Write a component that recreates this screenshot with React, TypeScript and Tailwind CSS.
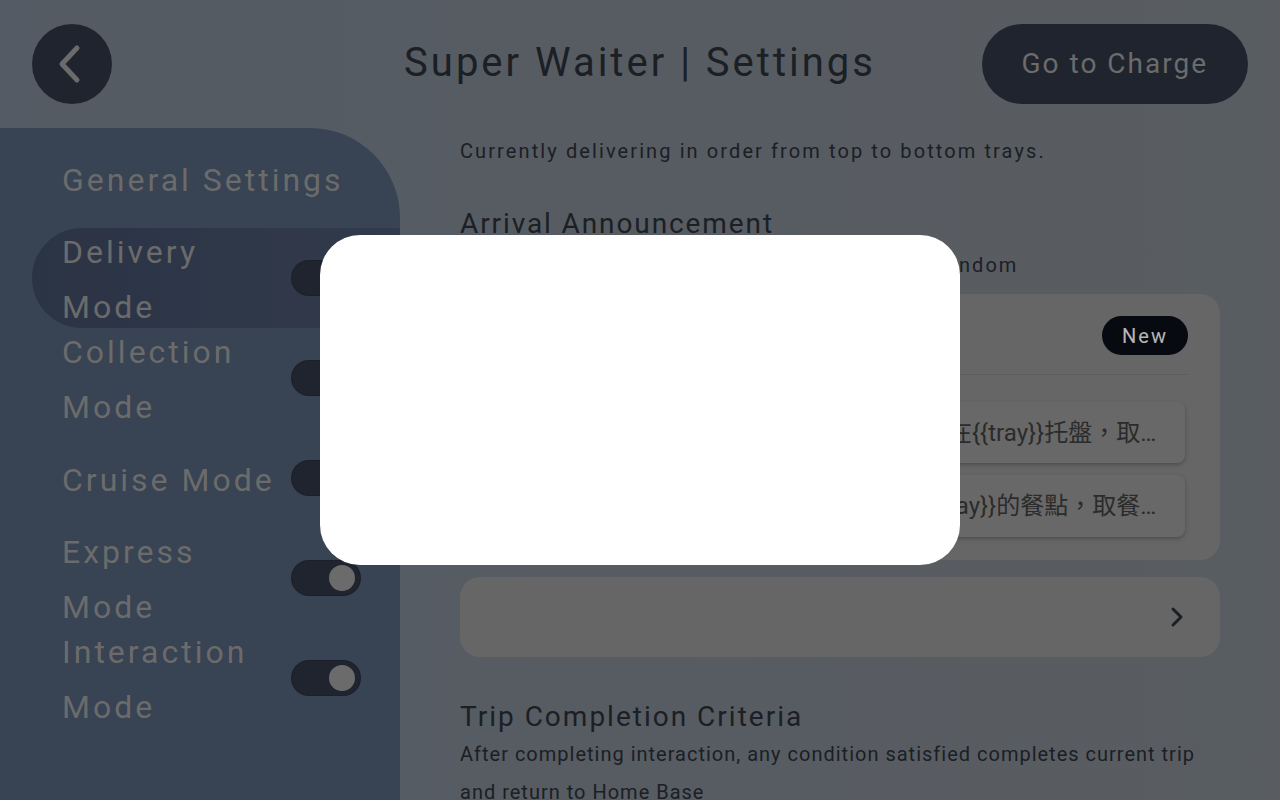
import React from 'react';
import { ChevronRight } from 'lucide-react';

const modes = [
  { label: 'Delivery Mode', active: true },
  { label: 'Collection Mode', active: false },
  { label: 'Cruise Mode', active: false },
  { label: 'Express Mode', active: false },
  { label: 'Interaction Mode', active: false },
];

function Toggle() {
  return (
    <div className="w-[68px] h-[34px] rounded-full bg-[#292e3b] ring-1 ring-[#232834] flex items-center justify-end pr-[5px] flex-shrink-0">
      <div className="w-[26px] h-[26px] rounded-full bg-[#868686]" />
    </div>
  );
}

export default function App() {
  return (
    <div
      className="relative w-[1280px] h-[800px] overflow-hidden bg-gradient-to-r from-[#6a727d] to-[#70757a] flex flex-col"
      style={{ fontFamily: 'Roboto, "Noto Sans CJK TC", sans-serif' }}
    >
      {/* Header */}
      <header className="h-[128px] flex-shrink-0 grid grid-cols-[1fr_auto_1fr] items-center px-[32px]">
        <button className="w-[80px] h-[80px] rounded-full bg-[#292e3b] justify-self-start">
          <svg viewBox="0 0 80 80" className="w-[80px] h-[80px]">
            <path d="M45 24 L30 40 L45 56" fill="none" stroke="#868686" strokeWidth="5" strokeLinecap="round" strokeLinejoin="round" />
          </svg>
        </button>
        <h1 className="text-[40px] tracking-[3px] text-[#23272d] leading-none pb-[2px]">Super Waiter | Settings</h1>
        <button className="justify-self-end h-[80px] px-[40px] rounded-full bg-[#292e3b] text-[#868686] text-[28px] tracking-[2px]">
          Go to Charge
        </button>
      </header>

      <div className="flex flex-1 min-h-0">
        {/* Sidebar */}
        <aside className="w-[400px] flex-shrink-0 bg-[#475469] rounded-tr-[90px]">
          <div className="h-[100px] flex items-center pl-[62px] pt-[4px] text-[32px] tracking-[3px] text-[#868686]">
            General Settings
          </div>
          <ul>
            {modes.map(m => (
              <li
                key={m.label}
                className={
                  m.active
                    ? 'h-[100px] ml-[32px] pl-[30px] flex items-center rounded-l-full bg-gradient-to-r from-[#364157] to-[#3f4a5f]'
                    : 'h-[100px] ml-[32px] pl-[30px] flex items-center'
                }
              >
                <span className="w-[220px] pt-[4px] text-[32px] leading-[55px] tracking-[3px] text-[#868686] flex-shrink-0">
                  {m.label}
                </span>
                <span className="ml-[10px]">
                  <Toggle />
                </span>
              </li>
            ))}
          </ul>
        </aside>

        {/* Main content */}
        <main className="flex-1 min-w-0 overflow-hidden px-[60px] pt-[8px] text-[#23272d]">
          <p className="text-[20px] leading-[30px] tracking-[2.1px]">
            Currently delivering in order from top to bottom trays.
          </p>

          <h2 className="mt-[38px] text-[28px] leading-[40px] tracking-[1.9px]">Arrival Announcement</h2>
          <p className="mt-[6px] text-[20px] leading-[30px] tracking-[2px] whitespace-nowrap overflow-hidden">
            Announcement content is played in order or random
          </p>

          <div className="mt-[14px] rounded-[20px] bg-[#808080] px-[32px] pt-[22px] pb-[23px]">
            <div className="flex items-center justify-between pb-[19px] border-b border-[#737373]">
              <span className="text-[22px] tracking-[1.5px]">Announcement List</span>
              <span className="h-[39px] w-[86px] rounded-full bg-[#090d14] text-[#e4e4e4] text-[20px] tracking-[2px] flex items-center justify-center">
                New
              </span>
            </div>
            <div className="mt-[27px] flex flex-col gap-[12px] mr-[3px]">
              <div className="h-[61px] rounded-[8px] bg-[#828282] shadow-[0_2px_4px_rgba(0,0,0,0.25)] flex items-center pl-[24px] pr-[26px] min-w-0">
                <span className="truncate text-[24px] text-[#363636]">
                  親愛的顧客您好，您的餐點已經送達，請在{'{{tray}}'}托盤，取出您的餐點
                </span>
              </div>
              <div className="h-[62px] rounded-[8px] bg-[#828282] shadow-[0_2px_4px_rgba(0,0,0,0.25)] flex items-center pl-[24px] pr-[26px] min-w-0">
                <span className="truncate text-[24px] text-[#363636]">
                  您好，您的餐點已送到，請取走放置於{'{{tray}}'}的餐點，取餐完成後請按下確認
                </span>
              </div>
            </div>
          </div>

          <div className="mt-[17px] h-[80px] rounded-[20px] bg-[#808080] flex items-center justify-end pr-[27px]">
            <ChevronRight size={32} strokeWidth={2.2} color="#23272f" />
          </div>

          <h2 className="mt-[42px] text-[28px] leading-[36px] tracking-[2px]">Trip Completion Criteria</h2>
          <p className="text-[20px] leading-[38px] tracking-[1px]">
            After completing interaction, any condition satisfied completes current trip and return to Home Base
          </p>
        </main>
      </div>

      {/* Modal */}
      <div className="fixed inset-0 bg-black/20 flex items-center justify-center">
        <div className="w-[640px] h-[330px] bg-white rounded-[40px]" />
      </div>
    </div>
  );
}
